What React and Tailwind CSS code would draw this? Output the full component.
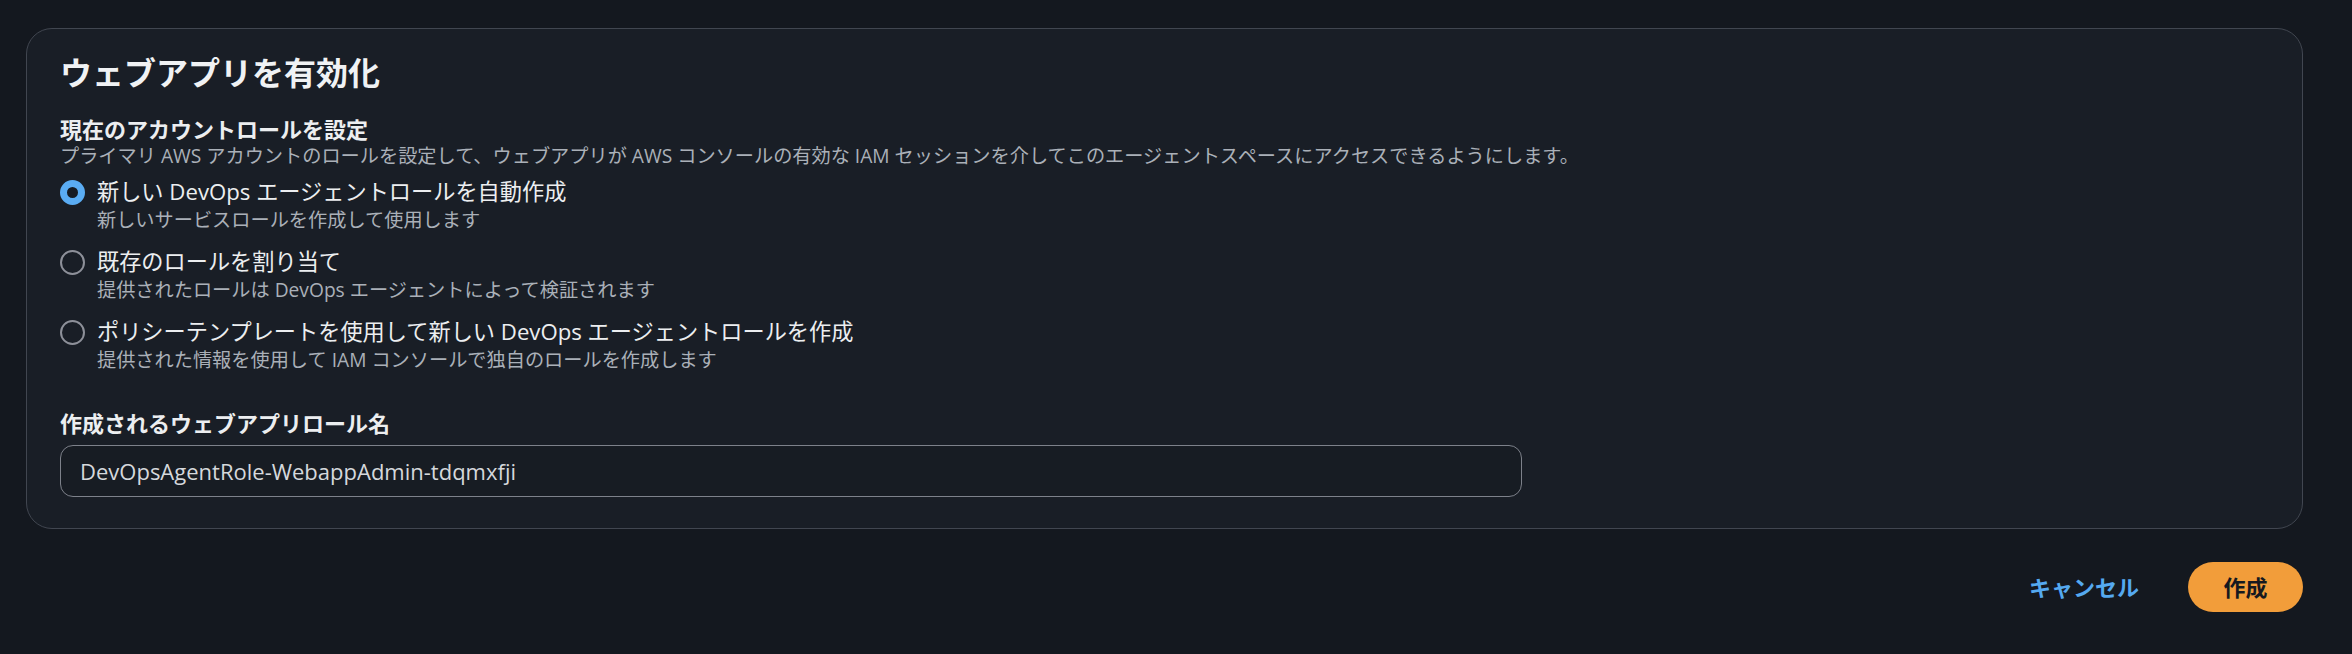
import React, { useState } from 'react';

const options = [
  {
    id: 'auto',
    label: '新しい DevOps エージェントロールを自動作成',
    sub: '新しいサービスロールを作成して使用します',
  },
  {
    id: 'existing',
    label: '既存のロールを割り当て',
    sub: '提供されたロールは DevOps エージェントによって検証されます',
  },
  {
    id: 'template',
    label: 'ポリシーテンプレートを使用して新しい DevOps エージェントロールを作成',
    sub: '提供された情報を使用して IAM コンソールで独自のロールを作成します',
  },
];

const Radio = ({ checked }) =>
  checked ? (
    <span className="mt-[3px] box-border w-[25px] h-[25px] shrink-0 rounded-full border-[7px] border-[#5aacf3] bg-[#161b22]" />
  ) : (
    <span className="mt-[3px] box-border w-[25px] h-[25px] shrink-0 rounded-full border-2 border-[#8d9099] bg-transparent" />
  );

const App = () => {
  const [selected, setSelected] = useState('auto');
  const [roleName, setRoleName] = useState('DevOpsAgentRole-WebappAdmin-tdqmxfji');

  return (
    <div
      className="min-h-screen bg-[#14181f] pt-[28px] pl-[26px] pr-[49px] text-[#e9ebed]"
      style={{ fontFamily: '"Open Sans", "Noto Sans CJK JP", sans-serif' }}
    >
      <div className="box-border rounded-[26px] border border-[#414650] bg-[#191e26] pt-[24px] pb-[31px] pl-[33px] pr-[33px]">
        <h2 className="text-[32px] leading-[40px] font-bold text-[#f0f2f4]">ウェブアプリを有効化</h2>

        <div className="mt-[22px]">
          <div className="text-[22px] leading-[28px] font-bold text-[#eceef0]">現在のアカウントロールを設定</div>
          <div className="text-[19.2px] leading-[26px] text-[#aab0b8]">
            プライマリ AWS アカウントのロールを設定して、ウェブアプリが AWS コンソールの有効な IAM セッションを介してこのエージェントスペースにアクセスできるようにします。
          </div>
        </div>

        <div className="mt-[8px] flex flex-col gap-[14px]">
          {options.map((opt) => (
            <label
              key={opt.id}
              className="flex items-start gap-[12px] cursor-pointer"
              onClick={() => setSelected(opt.id)}
            >
              <Radio checked={selected === opt.id} />
              <div className="flex flex-col">
                <span className="text-[22.2px] leading-[30px] text-[#eceef0]">{opt.label}</span>
                <span className="text-[19.2px] leading-[26px] text-[#aab0b8]">{opt.sub}</span>
              </div>
            </label>
          ))}
        </div>

        <div className="mt-[35px] text-[22px] leading-[30px] font-bold text-[#eceef0]">作成されるウェブアプリロール名</div>
        <input
          value={roleName}
          onChange={(e) => setRoleName(e.target.value)}
          className="mt-[7px] box-border block w-[1462px] h-[52px] rounded-[13px] border border-[#7d818a] bg-[#171c23] px-[19px] text-[22px] text-[#d5d8dc] outline-none"
          style={{ fontFamily: '"Open Sans", "Noto Sans CJK JP", sans-serif' }}
        />
      </div>

      <div className="mt-[33px] flex items-center justify-end">
        <button className="px-[30px] text-[22px] font-bold text-[#55a9f0]">キャンセル</button>
        <button className="ml-[19px] h-[50px] w-[115px] rounded-full bg-[#f29d3a] text-[22px] font-bold text-[#16191f]">
          作成
        </button>
      </div>
    </div>
  );
};

export default App;
